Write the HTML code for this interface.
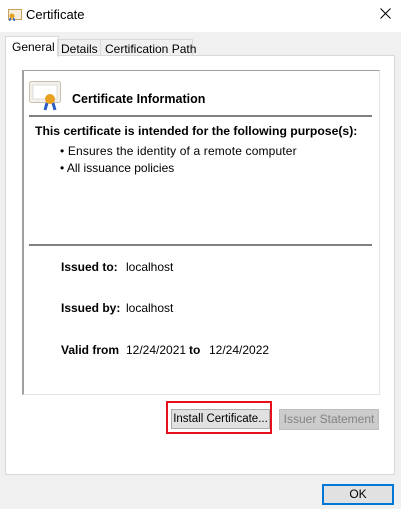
<!DOCTYPE html><html><head><style>
body{margin:0;width:401px;height:509px;background:#f0f0f0;font-family:"Liberation Sans",sans-serif;font-size:12px;color:#000;position:relative;overflow:hidden}
.a{position:absolute;white-space:nowrap}
.b{font-weight:bold}
</style></head><body>
<div class="a" style="left:0;top:0;width:401px;height:32px;background:#fff"></div>
<svg class="a" style="left:8px;top:9px" width="14" height="12"><rect x="0.5" y="0.5" width="13" height="10" fill="#f6eedc" stroke="#c8a060"/><circle cx="4" cy="7" r="2.5" fill="#e0a020"/><path d="M2.5 9l-1 3M5.5 9l1 3" stroke="#3060c0" stroke-width="1.5"/></svg>
<div class="a" style="left:26px;top:7px;font-size:13px">Certificate</div>
<svg class="a" style="left:380px;top:8px" width="11" height="11"><path d="M0.5 0.5L10.5 10.5M10.5 0.5L0.5 10.5" stroke="#000" stroke-width="1"/></svg>
<div class="a" style="left:5px;top:55px;width:388px;height:418px;background:#fff;border:1px solid #d9d9d9"></div>
<div class="a" style="left:5px;top:36px;width:52px;height:20px;background:#fff;border:1px solid #d9d9d9;border-bottom:none"></div>
<div class="a" style="left:12px;top:40px">General</div>
<div class="a" style="left:57px;top:39px;width:42px;height:16px;border:1px solid #d9d9d9;border-bottom:none"></div>
<div class="a" style="left:61px;top:42px">Details</div>
<div class="a" style="left:99px;top:39px;width:93px;height:16px;border:1px solid #d9d9d9;border-bottom:none;border-left:none"></div>
<div class="a" style="left:105px;top:42px">Certification Path</div>
<div class="a" style="left:22px;top:70px;width:355px;height:323px;border-top:1px solid #a0a0a0;border-left:2px solid #a0a0a0;border-right:1px solid #e3e3e3;border-bottom:1px solid #e3e3e3"></div>
<svg class="a" style="left:29px;top:81px" width="32" height="30"><rect x="0.5" y="0.5" width="31" height="21" rx="2" fill="#f4f1ea" stroke="#c8c0b0"/><rect x="4" y="4" width="24" height="14" fill="#fff" stroke="#ddd"/><path d="M18 22l-2 7M24 22l2 7" stroke="#2a5cc8" stroke-width="3"/><circle cx="21" cy="18" r="5" fill="#e8a020"/></svg>
<div class="a b" style="left:72px;top:92px;font-size:12.5px">Certificate Information</div>
<div class="a" style="left:29px;top:115px;width:343px;height:2px;background:#808080"></div>
<div class="a b" style="left:35px;top:124px;font-size:12.2px">This certificate is intended for the following purpose(s):</div>
<div class="a" style="left:60px;top:144px;letter-spacing:0.15px">• Ensures the identity of a remote computer</div>
<div class="a" style="left:60px;top:161px">• All issuance policies</div>
<div class="a" style="left:29px;top:244px;width:343px;height:2px;background:#808080"></div>
<div class="a b" style="left:61px;top:260px">Issued to:</div><div class="a" style="left:126px;top:260px">localhost</div>
<div class="a b" style="left:61px;top:301px">Issued by:</div><div class="a" style="left:126px;top:301px">localhost</div>
<div class="a b" style="left:61px;top:343px">Valid from</div><div class="a" style="left:126px;top:343px">12/24/2021</div>
<div class="a b" style="left:189px;top:343px">to</div><div class="a" style="left:209px;top:343px">12/24/2022</div>
<div class="a" style="left:166px;top:401px;width:106px;height:33px;border:2px solid #e8101c;box-sizing:border-box"></div>
<div class="a" style="left:171px;top:409px;width:99px;height:20px;background:#e1e1e1;border:1px solid #adadad;box-sizing:border-box;text-align:center;line-height:18px;font-size:11.5px">Install Certificate...</div>
<div class="a" style="left:279px;top:409px;width:100px;height:21px;background:#cccccc;border:1px solid #bfbfbf;box-sizing:border-box;text-align:center;line-height:19px;color:#838383">Issuer Statement</div>
<div class="a" style="left:322px;top:484px;width:72px;height:21px;background:#e1e1e1;border:2px solid #0078d7;box-sizing:border-box;text-align:center;line-height:17px">OK</div>
</body></html>
